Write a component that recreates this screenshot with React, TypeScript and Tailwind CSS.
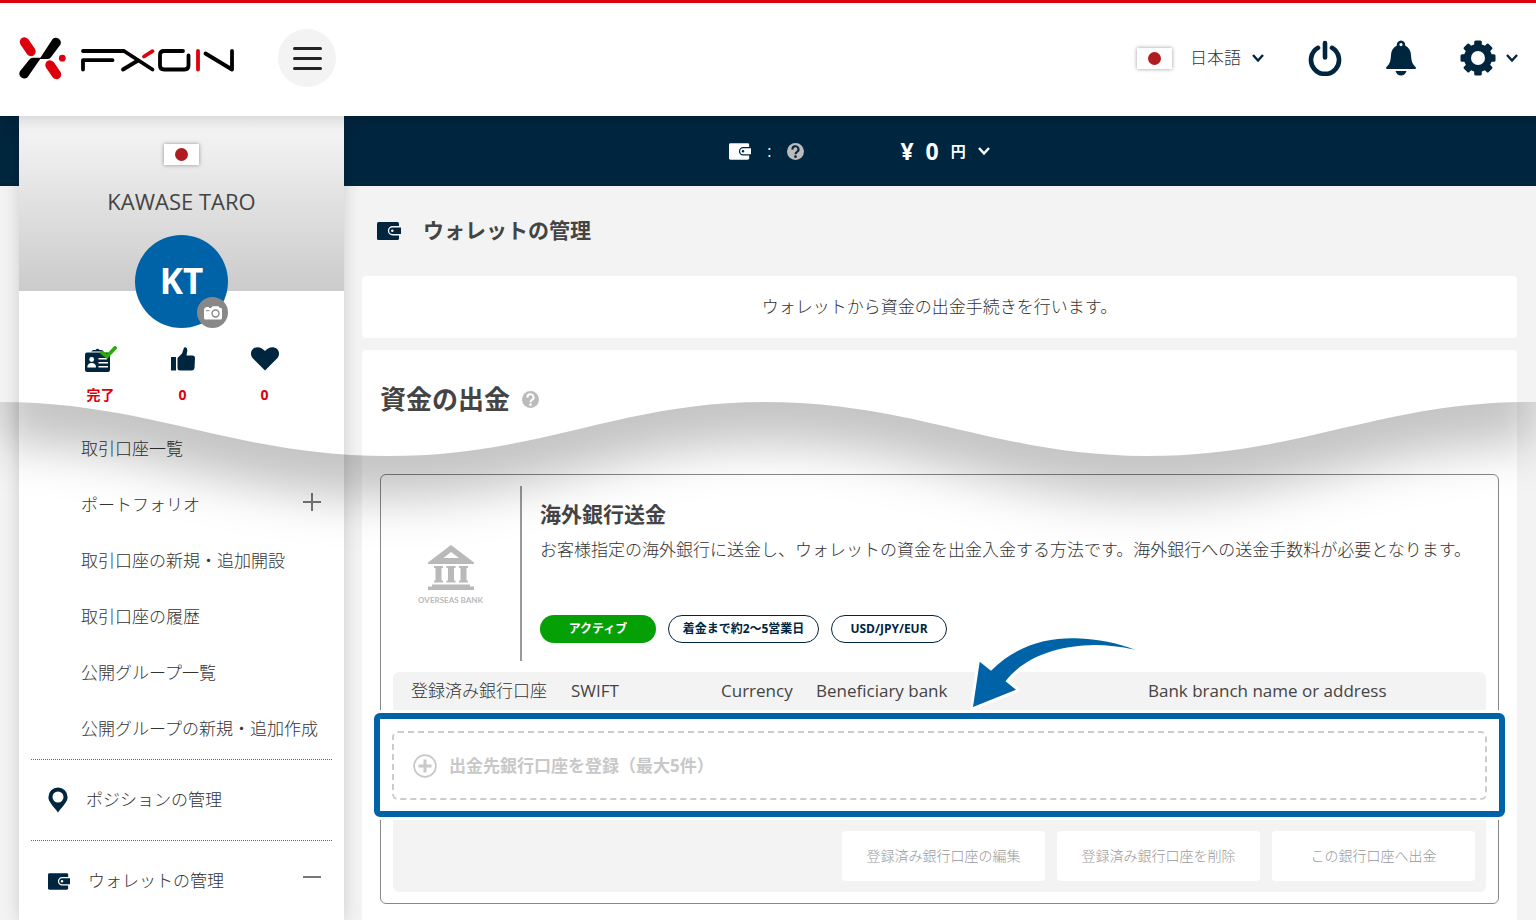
import type { ReactNode } from 'react'

type IconProps = {
  className?: string
}

const sans = "font-['Open_Sans','Noto_Sans_CJK_JP',sans-serif]"

const menuItems = [
  { label: '取引口座一覧' },
  { label: 'ポートフォリオ', expandable: true },
  { label: '取引口座の新規・追加開設' },
  { label: '取引口座の履歴' },
  { label: '公開グループ一覧' },
  { label: '公開グループの新規・追加作成' },
]

const actions = ['登録済み銀行口座の編集', '登録済み銀行口座を削除', 'この銀行口座へ出金']

function Logo() {
  return (
    <svg viewBox="18 36 218 44" className="h-11 w-[218px]" role="img" aria-label="FXON">
      <g fill="none" strokeLinecap="round" stroke="#dc000c">
        <path d="M24.5 42 31 51.5M50 65 56.5 74.5" strokeWidth="9.4" />
        <path d="M144 56.5 152.5 51.2M198 51V69.5" strokeWidth="3.8" />
      </g>
      <circle cx="62.3" cy="58.2" r="3.4" fill="#dc000c" />
      <path d="M41 57.8H33Q30.5 57.8 29 60L19.8 71.5A5 5 0 0 0 27.6 77.3L39.5 60ZM39.5 59H47.5Q50 59 51.5 56.5L60.5 44.5A5 5 0 0 0 52.8 38.8L41.5 56Z" />
      <g fill="none" stroke="#000" strokeWidth="3.8" strokeLinecap="round" strokeLinejoin="round">
        <path d="M83 51H124L152.5 69.5M83 69.5V60.2H112.5M123 69.5 138 60.5" />
        <path d="M183 51H164Q160 51 160 55V65.5Q160 69.5 164 69.5H184.5Q188.5 69.5 188.5 65.5V55.5" />
        <path d="M205.5 53.5 232 69.5V51" />
      </g>
    </svg>
  )
}

function FlagJapan() {
  return (
    <span className="flex h-[21px] w-[35px] shrink-0 items-center justify-center bg-white shadow-[0_0_4px_rgba(0,0,0,0.4)]">
      <span className="size-[13px] rounded-full bg-[#b01c20]" />
    </span>
  )
}

function ChevronDown({ className }: IconProps) {
  return (
    <svg viewBox="0 0 12 12" className={className} fill="none" stroke="currentColor" strokeWidth="2.4" aria-hidden="true">
      <path d="M1 3 6 8.5 11 3" />
    </svg>
  )
}

function PowerIcon() {
  return (
    <svg viewBox="0 0 34 36" className="h-9 w-[34px]" fill="none" stroke="currentColor" strokeWidth="4.6" strokeLinecap="round" aria-hidden="true">
      <path d="M17 3V17.5M10 7.8A14 14 0 1 0 24 7.8" />
    </svg>
  )
}

function BellIcon() {
  return (
    <svg viewBox="0 0 30 36" className="h-9 w-[30px]" fill="currentColor" aria-hidden="true">
      <path
        fillRule="evenodd"
        d="M15 .5A4.200 4.200 0 0 0 10.900 5.500C7 7.500 5.200 11 5 15C4.800 20 4 24 1 26.500C-.8 28 .2 29 1.500 29H28.500C29.800 29 30.800 28 29 26.500C26 24 25.200 20 25 15C24.800 11 23 7.500 19.100 5.500A4.200 4.200 0 0 0 15 .5ZM15 3A1.600 1.600 0 1 1 15 6.200A1.600 1.600 0 1 1 15 3Z"
      />
      <path d="M9.500 31H20.500C19.500 34 17.500 35.500 15 35.500S10.500 34 9.500 31Z" />
    </svg>
  )
}

function GearIcon() {
  return (
    <svg viewBox="0 0 36 36" className="size-9" fill="currentColor" aria-hidden="true">
      <circle cx="18" cy="18" r="14" />
      {[0, 45, 90, 135].map((angle) => (
        <rect key={angle} x="14.2" y=".5" width="7.6" height="35" rx="1.5" transform={`rotate(${angle} 18 18)`} />
      ))}
      <circle cx="18" cy="18" r="7" fill="#fff" />
    </svg>
  )
}

function WalletIcon({ className, cut = '#fff' }: IconProps & { cut?: string }) {
  return (
    <svg viewBox="0 0 24 18" className={className} aria-hidden="true">
      <rect width="22" height="18" rx="1.6" fill="currentColor" />
      <path d="M24 4H15.5A4.700 4.700 0 0 0 15.500 13.400H24Z" fill={cut} />
      <path d="M24 5.400H15.500A3.300 3.300 0 0 0 15.500 12H24Z" fill="currentColor" />
      <circle cx="15.300" cy="8.700" r="1.300" fill={cut} />
    </svg>
  )
}

function HelpIcon() {
  return (
    <svg viewBox="0 0 18 18" className="size-[17px]" aria-hidden="true">
      <circle cx="9" cy="9" r="9" fill="#bbb" />
      <path d="M5.8 7A3.200 3.200 0 1 1 10.600 9.400Q9 10.300 9 12" fill="none" stroke="var(--help-mark)" strokeWidth="2.2" />
      <circle cx="9" cy="14.500" r="1.400" fill="var(--help-mark)" />
    </svg>
  )
}

function CameraIcon() {
  return (
    <svg viewBox="0 0 18 14" className="h-3.5 w-[18px]" aria-hidden="true">
      <path d="M1.5 2V1H5V2H7L8.5 .2H14.5L16 2H16.8Q18 2 18 3.200V12Q18 13.500 16.500 13.500H1.500Q0 13.500 0 12V3.200Q0 2 1.500 2Z" fill="#fff" />
      <circle cx="11.5" cy="7.5" r="3.5" fill="none" stroke="#888" strokeWidth="1.4" />
      <path d="M2 4.7H5.5" stroke="#888" strokeWidth="1" />
    </svg>
  )
}

function IdCardIcon() {
  return (
    <svg viewBox="0 0 32 27" className="h-[27px] w-8" aria-hidden="true">
      <path d="M6 5.500 8 4H10.500Q12.500 1.500 14.500 4H17L19 5.500Z" fill="#00263f" />
      <rect y="6.500" width="25" height="19.500" rx="2" fill="#00263f" />
      <circle cx="6.700" cy="13.500" r="2.400" fill="#fff" />
      <path d="M2.300 21.500Q2.300 17 6.700 17T11 21.500Z" fill="#fff" />
      <path d="M13.500 12.800H22M13.500 16.800H23M13.500 20.800H23" stroke="#fff" strokeWidth="1.600" />
      <path d="M17 6.500 22 10.500 30 2" fill="none" stroke="#2bab0c" strokeWidth="3.800" strokeLinecap="round" />
    </svg>
  )
}

function ThumbIcon() {
  return (
    <svg viewBox="0 0 24 24" className="h-6 w-6" fill="#00263f" aria-hidden="true">
      <path d="M0 10H5V23.500H0ZM6.500 11 11 6.500 13 .8Q13.400 0 14.500 .2Q16.500 .8 16.300 3.500L15.500 8.500H21.500Q24 8.500 24 11L23.500 21Q23.200 23.500 20.500 23.500H9Q6.500 23.500 6.500 21Z" />
    </svg>
  )
}

function HeartIcon() {
  return (
    <svg viewBox="0 0 28 24" className="h-6 w-7" fill="#00263f" aria-hidden="true">
      <path d="M14 23.500 2 11.500C-.8 8.500-.6 4 2.200 1.700C5.500-.9 10.500-.2 14 4C17.500-.2 22.500-.9 25.800 1.700C28.600 4 28.800 8.500 26 11.500Z" />
    </svg>
  )
}

function PinIcon() {
  return (
    <svg viewBox="0 0 20 26" className="h-[26px] w-5" fill="#00263f" aria-hidden="true">
      <path fillRule="evenodd" d="M10 .5A9.600 9.600 0 0 0 .4 10.200C.4 15 5 18.500 10 25.500C15 18.500 19.600 15 19.600 10.200A9.600 9.600 0 0 0 10 .5ZM10 4.500A5.500 5.500 0 1 1 10 15.500A5.500 5.500 0 1 1 10 4.500Z" />
    </svg>
  )
}

function BankIcon() {
  return (
    <svg viewBox="0 0 46 45" className="h-[45px] w-[46px]" fill="#b9b9b9" aria-hidden="true">
      <path fillRule="evenodd" d="M23 0 46 17.500V19H0V17.500ZM23 7 15.500 13H31Z" />
      <path d="M6 21H15V23H13.500V35.500H15V37.500H6V35.500H7.500V23H6ZM18.500 21H27.500V23H26V35.500H27.500V37.500H18.500V35.500H20V23H18.500ZM31 21H40V23H38.500V35.500H40V37.500H31V35.500H32.500V23H31ZM4 39.500H42V41.500H46V45H0V41.500H4Z" />
    </svg>
  )
}

function PlusCircleIcon() {
  return (
    <svg viewBox="0 0 24 24" className="size-6" fill="none" stroke="currentColor" aria-hidden="true">
      <circle cx="12" cy="12" r="10.900" strokeWidth="1.700" />
      <path d="M12 5.500V18.500M5.500 12H18.500" strokeWidth="3" />
    </svg>
  )
}

function CurvedArrow() {
  return (
    <svg viewBox="968 634 176 80" className="pointer-events-none absolute -top-[85px] left-[587px] h-20 w-44" aria-hidden="true">
      <path
        d="M974 707 980.700 661.700 992 670.700C1018 645 1048 637.500 1077 638.300C1100 639 1118 643 1136 649.700C1121 646.500 1108 645 1096 645C1060 645.500 1026 656 1006.500 681.300L1017 689.700Z"
        fill="#0063a8"
        stroke="#fff"
        strokeWidth="6"
        strokeLinejoin="round"
        paintOrder="stroke"
      />
    </svg>
  )
}

function TornEdge() {
  return (
    <svg
      viewBox="0 0 1536 200"
      preserveAspectRatio="none"
      className="pointer-events-none absolute inset-x-0 top-[402px] h-[200px] w-full"
      aria-hidden="true"
    >
      <defs>
        <clipPath id="below">
          <path d="M0 0C150 0 235 54 388 54C540 54 620 0 764 0C915 0 1000 54 1146 54C1300 54 1380 0 1528 0H1536V200H0Z" />
        </clipPath>
        <filter id="soft" filterUnits="userSpaceOnUse" x="-100" y="-200" width="1736" height="400">
          <feGaussianBlur stdDeviation="24" />
        </filter>
      </defs>
      <g clipPath="url(#below)">
        <path
          d="M0-140H1536V42C1380 42 1300 96 1146 96C1000 96 920 42 768 42C620 42 540 96 388 96C235 96 150 42 0 42Z"
          fillOpacity="0.23"
          filter="url(#soft)"
        />
      </g>
    </svg>
  )
}

function Header() {
  return (
    <header className="relative z-10 flex h-[116px] items-center justify-between border-t-3 border-[#dc000c] bg-white px-[18px] pb-[3px] text-[#00263f] shadow-[0_2px_16px_rgba(0,0,0,0.18)]">
      <div className="flex items-center gap-[42px]">
        <a href="#">
          <Logo />
        </a>
        <button aria-label="メニュー" className="flex size-[58px] flex-col items-center justify-center gap-[7px] rounded-full bg-[#f3f3f3]">
          <span className="h-[3px] w-[29px] rounded-full bg-[#222]" />
          <span className="h-[3px] w-[29px] rounded-full bg-[#222]" />
          <span className="h-[3px] w-[29px] rounded-full bg-[#222]" />
        </button>
      </div>
      <div className="flex items-center gap-11">
        <button className="flex items-center">
          <FlagJapan />
          <span className="pr-[11px] pl-[18px] text-[17px] font-light text-[#333]">日本語</span>
          <ChevronDown className="size-3" />
        </button>
        <button aria-label="ログアウト">
          <PowerIcon />
        </button>
        <button aria-label="お知らせ">
          <BellIcon />
        </button>
        <button aria-label="設定" className="flex items-center gap-2.5">
          <GearIcon />
          <ChevronDown className="size-3" />
        </button>
      </div>
    </header>
  )
}

function Stat({ icon, value }: { icon: ReactNode; value: string }) {
  return (
    <div className="flex w-[82px] flex-col items-center">
      <span className="flex h-7 items-center">{icon}</span>
      <span className="mt-3 text-sm leading-5 font-bold text-[#dc000c]">{value}</span>
    </div>
  )
}

function Sidebar() {
  return (
    <aside className="flex w-[325px] shrink-0 flex-col bg-white shadow-[0_0_16px_rgba(0,0,0,0.16)]">
      <div className="flex h-[175px] flex-col items-center bg-linear-to-b from-[#f7f7f7] to-[#cbcbcb] pt-7">
        <FlagJapan />
        <p className="mt-5 text-[22px] leading-8">KAWASE TARO</p>
        <div className="relative mt-[18px] flex size-[93px] shrink-0 items-center justify-center rounded-full bg-[#0063a8] text-[35px] font-bold text-white">
          KT
          <button aria-label="写真を変更" className="absolute right-0 bottom-0 flex size-[31px] items-center justify-center rounded-full bg-[#888]">
            <CameraIcon />
          </button>
        </div>
      </div>
      <div className="mt-[54px] flex justify-center pl-0.5">
        <Stat icon={<IdCardIcon />} value="完了" />
        <Stat icon={<ThumbIcon />} value="0" />
        <Stat icon={<HeartIcon />} value="0" />
      </div>
      <nav className="mt-4 px-3 text-[17px] font-light text-[#333]">
        <ul className="pb-0.5">
          {menuItems.map((item) => (
            <li key={item.label} className="flex h-14 items-center justify-between pr-[11px] pl-[50px]">
              <a href="#" className="whitespace-nowrap">{item.label}</a>
              {item.expandable && (
                <button aria-label="開く" className="pb-1.5">
                  <svg viewBox="0 0 18 18" className="size-[18px]" stroke="#777" strokeWidth="2" aria-hidden="true">
                    <path d="M9 0V18M0 9H18" />
                  </svg>
                </button>
              )}
            </li>
          ))}
        </ul>
        <div className="flex items-center gap-[18px] border-t border-dotted border-[#666] py-[27px] pl-[17px] leading-6">
          <PinIcon />
          <a href="#">ポジションの管理</a>
        </div>
        <div className="flex items-center gap-[18px] border-t border-dotted border-[#666] pt-7 pr-[11px] pb-6 pl-[17px] leading-6">
          <WalletIcon className="h-[17px] w-[22px] text-[#00263f]" />
          <a href="#">ウォレットの管理</a>
          <button aria-label="閉じる" className="ml-auto">
            <svg viewBox="0 0 18 18" className="size-[18px]" stroke="#777" strokeWidth="2" aria-hidden="true">
              <path d="M0 5H18" />
            </svg>
          </button>
        </div>
      </nav>
    </aside>
  )
}

function BankCard() {
  return (
    <section className="mt-[53px] rounded-md border border-[#888] px-3 py-[11px]">
      <div className="flex h-[175px]">
        <div className="flex w-[129px] shrink-0 flex-col items-center justify-center border-r-2 border-[#999] pt-1 pr-3">
          <BankIcon />
          <span className="mt-1 font-['Lato',sans-serif] text-[8px] leading-3 font-bold text-[#b9b9b9]">OVERSEAS BANK</span>
        </div>
        <div className="min-w-0 flex-1 pt-3 pl-[18px]">
          <h3 className="text-[21px] leading-8 font-bold">海外銀行送金</h3>
          <p className="mt-2 text-[17px] leading-6 font-light whitespace-nowrap text-[#333]">
            お客様指定の海外銀行に送金し、ウォレットの資金を出金入金する方法です。海外銀行への送金手数料が必要となります。
          </p>
          <div className="mt-[53px] flex gap-3 text-xs font-bold text-[#00263f]">
            <span className="flex h-7 w-[116px] items-center justify-center rounded-full bg-[#05a005] text-white">アクティブ</span>
            <span className="flex h-7 w-[151px] items-center justify-center rounded-full border border-[#00263f] bg-white">着金まで約2～5営業日</span>
            <span className="flex h-7 w-[116px] items-center justify-center rounded-full border border-[#00263f] bg-white">USD/JPY/EUR</span>
          </div>
        </div>
      </div>
      <table className="mt-[11px] w-full table-fixed border-separate border-spacing-0 text-left text-[17px] whitespace-nowrap">
        <thead>
          <tr className="h-[38px] bg-[#f3f3f3]">
            <th className="w-[160px] rounded-tl-md pl-[18px] font-light text-[#333]">登録済み銀行口座</th>
            <th className="w-[150px] pl-[18px] font-normal">SWIFT</th>
            <th className="w-[95px] pl-[18px] font-normal">Currency</th>
            <th className="w-[332px] pl-[18px] font-normal">Beneficiary bank</th>
            <th className="rounded-tr-md pl-[18px] font-normal">Bank branch name or address</th>
          </tr>
        </thead>
        <tbody>
          <tr>
            <td colSpan={5} className="p-0 py-[3px]">
              <div className="relative -mx-[19px] rounded-md border-6 border-[#0063a8] bg-white px-3 pt-3 pb-[11px] ring-3 ring-white">
                <button className="flex h-[69px] w-full items-center gap-3 rounded-md border-2 border-dashed border-[#ccc] px-[19px] font-bold text-[#c8c8c8]">
                  <PlusCircleIcon />
                  出金先銀行口座を登録（最大5件）
                </button>
                <CurvedArrow />
              </div>
            </td>
          </tr>
        </tbody>
      </table>
      <div className="flex justify-end gap-3 rounded-b-md bg-[#f3f3f3] px-[11px] py-[11px] text-sm">
        {actions.map((label) => (
          <button key={label} disabled className="h-[50px] w-[203px] rounded bg-white font-light text-[#999]">
            {label}
          </button>
        ))}
      </div>
    </section>
  )
}

export default function App() {
  return (
    <div className={`relative flex min-h-screen flex-col overflow-hidden text-[#444] ${sans}`} lang="ja">
      <Header />
      <div className="flex flex-1 gap-[18px] bg-[linear-gradient(#00263f_70px,#f3f3f3_70px)] px-[19px]">
        <Sidebar />
        <main className="flex min-w-0 flex-1 flex-col">
          <div className="flex h-[70px] shrink-0 items-center justify-center pr-40 text-white [--help-mark:#00263f]">
            <WalletIcon className="h-[17px] w-[22px]" cut="#00263f" />
            <span className="mx-4">:</span>
            <HelpIcon />
            <button className="ml-24 flex items-center gap-3 text-[23px] font-bold">
              <span>¥</span>
              <span>0</span>
              <span className="text-[15px]">円</span>
              <ChevronDown className="size-3" />
            </button>
          </div>
          <div className="flex h-[90px] shrink-0 items-center gap-[22px] px-[15px]">
            <WalletIcon className="h-[18px] w-6 text-[#00263f]" cut="#f3f3f3" />
            <h1 className="text-[21px] font-bold">ウォレットの管理</h1>
          </div>
          <p className="rounded bg-white py-[19px] text-center text-[17px] leading-6 font-light text-[#333]">
            ウォレットから資金の出金手続きを行います。
          </p>
          <section className="mt-3 flex-1 rounded-t bg-white px-[18px] pt-[27px] pb-3">
            <div className="flex h-11 items-center gap-3 [--help-mark:#fff]">
              <h2 className="text-[26px] font-bold">資金の出金</h2>
              <HelpIcon />
            </div>
            <BankCard />
          </section>
        </main>
      </div>
      <TornEdge />
    </div>
  )
}
